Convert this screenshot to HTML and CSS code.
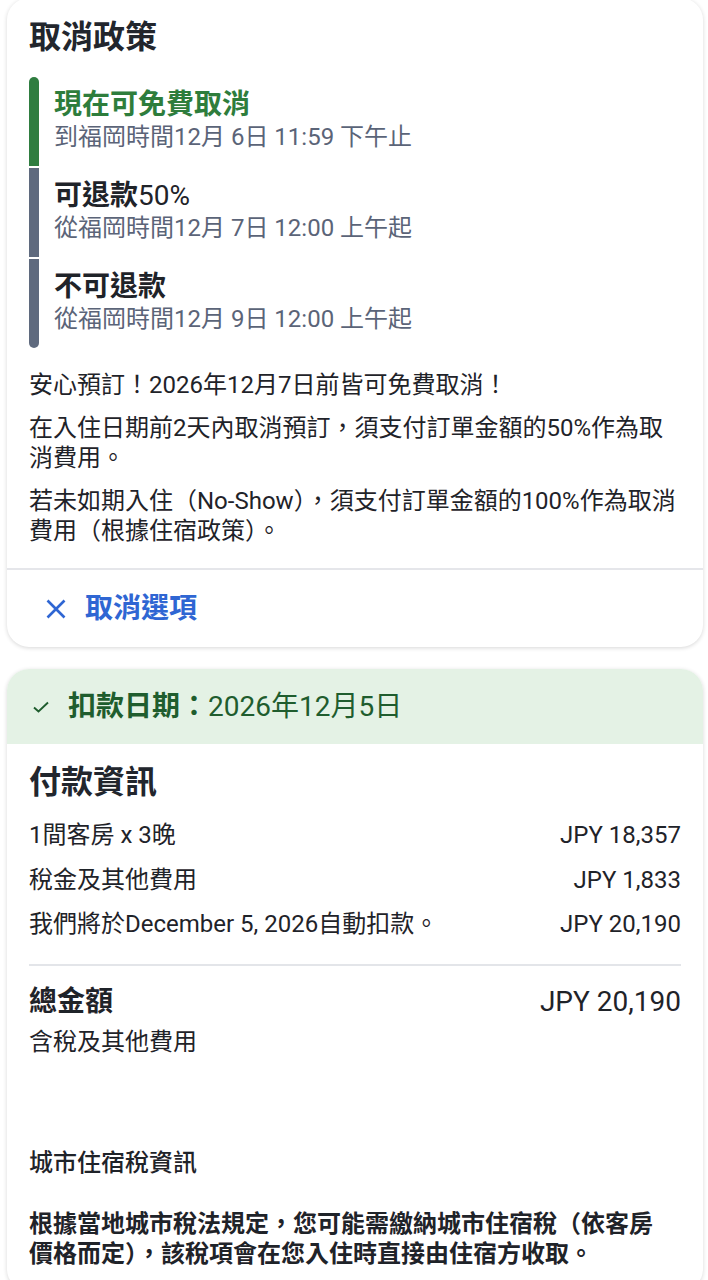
FILE: index.html
```html
<!DOCTYPE html>
<html lang="zh-Hant">
<head>
    <meta charset="UTF-8">
    <meta name="viewport" content="width=device-width, initial-scale=1.0">
    <title>取消政策與付款資訊</title>
    <link rel="stylesheet" href="styles.css">
</head>
<body>

<div class="card policy-card">
    <div class="card-body">
        <h2 class="card-title">取消政策</h2>

        <div class="timeline">
            <div class="step step-free">
                <div class="step-bar"></div>
                <div class="step-text">
                    <div class="step-title">現在可免費取消</div>
                    <div class="step-sub">到福岡時間12月 6日 11:59 下午止</div>
                </div>
            </div>
            <div class="step">
                <div class="step-bar"></div>
                <div class="step-text">
                    <div class="step-title">可退款<span class="num">50%</span></div>
                    <div class="step-sub">從福岡時間12月 7日 12:00 上午起</div>
                </div>
            </div>
            <div class="step">
                <div class="step-bar"></div>
                <div class="step-text">
                    <div class="step-title">不可退款</div>
                    <div class="step-sub">從福岡時間12月 9日 12:00 上午起</div>
                </div>
            </div>
        </div>

        <p class="policy-note">安心預訂！2026年12月7日前皆可免費取消！</p>
        <p class="policy-note">在入住日期前2天內取消預訂，須支付訂單金額的50%作為取消費用。</p>
        <p class="policy-note">若未如期入住（No-Show），須支付訂單金額的100%作為取消費用（根據住宿政策）。</p>
    </div>

    <div class="card-action">
        <button class="text-btn">
            <svg class="btn-icon" width="20" height="20" viewBox="0 0 20 20">
                <path d="M1.5 1.5 L18.5 18.5 M18.5 1.5 L1.5 18.5" stroke="currentColor" stroke-width="2.6" fill="none"/>
            </svg>
            <span>取消選項</span>
        </button>
    </div>
</div>

<div class="card payment-card">
    <div class="charge-banner">
        <svg class="check-icon" width="16" height="12" viewBox="0 0 16 12">
            <path d="M1 6.5 L5.5 10.5 L15 1.5" stroke="currentColor" stroke-width="1.9" fill="none"/>
        </svg>
        <span><strong>扣款日期：</strong>2026年12月5日</span>
    </div>

    <div class="card-body">
        <h2 class="card-title">付款資訊</h2>

        <div class="price-rows">
            <div class="price-row">
                <span>1間客房 x 3晚</span>
                <span>JPY 18,357</span>
            </div>
            <div class="price-row">
                <span>稅金及其他費用</span>
                <span>JPY 1,833</span>
            </div>
            <div class="price-row">
                <span>我們將於December 5, 2026自動扣款。</span>
                <span>JPY 20,190</span>
            </div>
        </div>

        <div class="total-row">
            <div>
                <div class="total-label">總金額</div>
                <div class="total-sub">含稅及其他費用</div>
            </div>
            <div class="total-amount">JPY 20,190</div>
        </div>

        <div class="tax-info">
            <h3 class="tax-title">城市住宿稅資訊</h3>
            <p class="tax-text">根據當地城市稅法規定，您可能需繳納城市住宿稅（依客房價格而定），該稅項會在您入住時直接由住宿方收取。</p>
        </div>
    </div>
</div>

</body>
</html>
```

FILE: styles.css
```css
body {
    font-family: Roboto, "Noto Sans CJK TC", sans-serif;
    background-color: #fff;
    margin: 0;
    padding: 0;
    color: #1f2329;
}
.card {
    margin: 0 5px 0 7px;
    background: #fff;
    border-radius: 22px;
    box-shadow: 0 1px 4px rgba(0, 0, 0, 0.16);
    overflow: hidden;
}
.policy-card {
    margin-top: -2px;
}
.payment-card {
    margin-top: 22px;
}
.card-body {
    padding: 19px 22px 22px 22px;
}
.card-title {
    margin: 0;
    font-size: 32px;
    line-height: 40px;
    font-weight: 700;
    color: #22262d;
}

/* 取消時間軸 */
.timeline {
    display: flex;
    flex-direction: column;
    gap: 2px;
    margin-top: 20px;
}
.step {
    display: flex;
}
.step-bar {
    width: 10px;
    flex-shrink: 0;
    background: #5f6a7e;
}
.step:first-child .step-bar {
    border-radius: 5px 5px 0 0;
}
.step:last-child .step-bar {
    border-radius: 0 0 5px 5px;
}
.step-free .step-bar {
    background: #2f7d40;
}
.step-text {
    padding: 11px 0 14px 15px;
}
.step-title {
    font-size: 28px;
    line-height: 34px;
    font-weight: 700;
    color: #1f2329;
}
.step-title .num {
    font-weight: 400;
}
.step-free .step-title {
    color: #2e7d3c;
}
.step-sub {
    font-size: 24px;
    line-height: 30px;
    color: #5b6478;
}
.policy-note {
    margin: 13px 0 0 0;
    font-size: 24px;
    line-height: 30px;
}
.timeline + .policy-note {
    margin-top: 22px;
}
.card-action {
    border-top: 2px solid #e5e6ea;
    padding: 22px 22px 21px 22px;
}
.text-btn {
    display: flex;
    align-items: center;
    gap: 19px;
    padding: 0 0 0 17px;
    background: none;
    border: none;
    font-family: inherit;
    font-size: 28px;
    line-height: 34px;
    font-weight: 700;
    color: #2f66d3;
    cursor: pointer;
}
.btn-icon {
    display: block;
}

/* 付款資訊 */
.charge-banner {
    display: flex;
    align-items: center;
    gap: 19px;
    padding: 21px 22px 20px 26px;
    background: #e4f2e5;
    color: #1f5d2e;
    font-size: 28px;
    line-height: 34px;
    font-weight: 400;
}
.charge-banner strong {
    font-weight: 700;
}
.check-icon {
    display: block;
}
.payment-card .card-body {
    padding-top: 18px;
}
.price-rows {
    display: flex;
    flex-direction: column;
    gap: 14.5px;
    margin-top: 18px;
    padding-bottom: 25px;
    border-bottom: 2px solid #e3e5e9;
}
.price-row {
    display: flex;
    justify-content: space-between;
    font-size: 24px;
    line-height: 30px;
}
.total-row {
    display: flex;
    justify-content: space-between;
    align-items: flex-start;
    margin-top: 19px;
}
.total-label {
    font-size: 28px;
    line-height: 34px;
    font-weight: 700;
}
.total-sub {
    margin-top: 8px;
    font-size: 24px;
    line-height: 30px;
}
.total-amount {
    font-size: 28px;
    line-height: 34px;
}
.tax-info {
    margin-top: 91px;
}
.tax-title {
    margin: 0;
    font-size: 24px;
    line-height: 30px;
    font-weight: 500;
}
.tax-text {
    margin: 31px 0 0 0;
    padding-right: 6px;
    font-size: 24px;
    line-height: 30px;
    font-weight: 700;
}
```
